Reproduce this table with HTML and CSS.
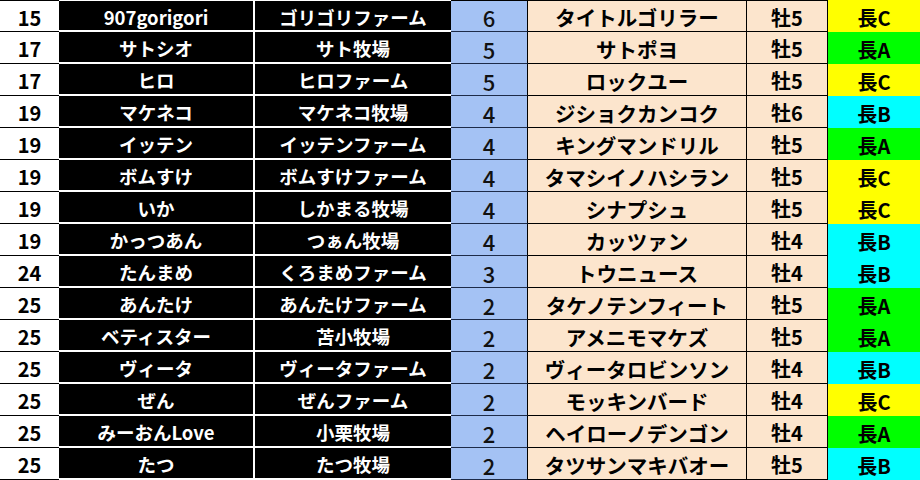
FILE: index.html
```html
<!DOCTYPE html>
<html lang="ja">
<head>
<meta charset="utf-8">
<link rel="stylesheet" href="styles.css">
</head>
<body>
<div class="sheet">
  <div class="row"><div class="c rank">15</div><div class="c name">907gorigori</div><div class="c farm">ゴリゴリファーム</div><div class="c num">6</div><div class="c horse">タイトルゴリラー</div><div class="c sex">牡5</div><div class="c type t-c">長C</div></div>
  <div class="row"><div class="c rank">17</div><div class="c name">サトシオ</div><div class="c farm">サト牧場</div><div class="c num">5</div><div class="c horse">サトポヨ</div><div class="c sex">牡5</div><div class="c type t-a">長A</div></div>
  <div class="row"><div class="c rank">17</div><div class="c name">ヒロ</div><div class="c farm">ヒロファーム</div><div class="c num">5</div><div class="c horse">ロックユー</div><div class="c sex">牡5</div><div class="c type t-c">長C</div></div>
  <div class="row"><div class="c rank">19</div><div class="c name">マケネコ</div><div class="c farm">マケネコ牧場</div><div class="c num">4</div><div class="c horse">ジショクカンコク</div><div class="c sex">牡6</div><div class="c type t-b">長B</div></div>
  <div class="row"><div class="c rank">19</div><div class="c name">イッテン</div><div class="c farm">イッテンファーム</div><div class="c num">4</div><div class="c horse">キングマンドリル</div><div class="c sex">牡5</div><div class="c type t-a">長A</div></div>
  <div class="row"><div class="c rank">19</div><div class="c name">ボムすけ</div><div class="c farm">ボムすけファーム</div><div class="c num">4</div><div class="c horse">タマシイノハシラン</div><div class="c sex">牡5</div><div class="c type t-c">長C</div></div>
  <div class="row"><div class="c rank">19</div><div class="c name">いか</div><div class="c farm">しかまる牧場</div><div class="c num">4</div><div class="c horse">シナプシュ</div><div class="c sex">牡5</div><div class="c type t-c">長C</div></div>
  <div class="row"><div class="c rank">19</div><div class="c name">かっつあん</div><div class="c farm">つぁん牧場</div><div class="c num">4</div><div class="c horse">カッツァン</div><div class="c sex">牡4</div><div class="c type t-b">長B</div></div>
  <div class="row"><div class="c rank">24</div><div class="c name">たんまめ</div><div class="c farm">くろまめファーム</div><div class="c num">3</div><div class="c horse">トウニュース</div><div class="c sex">牡4</div><div class="c type t-b">長B</div></div>
  <div class="row"><div class="c rank">25</div><div class="c name">あんたけ</div><div class="c farm">あんたけファーム</div><div class="c num">2</div><div class="c horse">タケノテンフィート</div><div class="c sex">牡5</div><div class="c type t-a">長A</div></div>
  <div class="row"><div class="c rank">25</div><div class="c name">ベティスター</div><div class="c farm">苫小牧場</div><div class="c num">2</div><div class="c horse">アメニモマケズ</div><div class="c sex">牡5</div><div class="c type t-a">長A</div></div>
  <div class="row"><div class="c rank">25</div><div class="c name">ヴィータ</div><div class="c farm">ヴィータファーム</div><div class="c num">2</div><div class="c horse">ヴィータロビンソン</div><div class="c sex">牡4</div><div class="c type t-b">長B</div></div>
  <div class="row"><div class="c rank">25</div><div class="c name">ぜん</div><div class="c farm">ぜんファーム</div><div class="c num">2</div><div class="c horse">モッキンバード</div><div class="c sex">牡4</div><div class="c type t-c">長C</div></div>
  <div class="row"><div class="c rank">25</div><div class="c name">みーおんLove</div><div class="c farm">小栗牧場</div><div class="c num">2</div><div class="c horse">ヘイローノデンゴン</div><div class="c sex">牡4</div><div class="c type t-a">長A</div></div>
  <div class="row"><div class="c rank">25</div><div class="c name">たつ</div><div class="c farm">たつ牧場</div><div class="c num">2</div><div class="c horse">タツサンマキバオー</div><div class="c sex">牡5</div><div class="c type t-b">長B</div></div>
</div>
</body>
</html>
```
FILE: styles.css
```css
html, body {
  margin: 0;
  padding: 0;
  background: #fff;
}
body {
  width: 920px;
  height: 480px;
  overflow: hidden;
  font-family: "Noto Sans CJK JP", "Noto Sans", sans-serif;
  font-weight: 700;
  color: #000;
}
.sheet {
  display: flex;
  flex-direction: column;
  width: 920px;
}
.row {
  display: flex;
  height: 32px;
}
.row:first-child .c {
  border-top: 1px solid #000;
}
.row:first-child .name,
.row:first-child .farm {
  border-top-color: #fff;
}
.c {
  box-sizing: border-box;
  display: flex;
  align-items: center;
  justify-content: center;
  height: 100%;
  padding-top: 3px;
  border-bottom: 1px solid #000;
  white-space: nowrap;
  line-height: 1;
}
.rank {
  width: 59px;
  background: #fff;
  font-size: 20px;
}
.name,
.farm {
  width: 196px;
  background: #000;
  color: #fff;
  font-size: 18.5px;
  border-bottom: 2px solid #fff;
}
.name {
  border-right: 2px solid #fff;
}
.num {
  width: 77px;
  background: #a4c2f4;
  color: #111;
  font-weight: 500;
  font-size: 22px;
  padding-top: 2px;
  border-right: 1px solid #000;
  border-bottom-color: #1d2b48;
}
.horse {
  width: 219px;
  background: #fce5cd;
  font-size: 20.5px;
  border-right: 1px solid #000;
}
.sex {
  width: 81px;
  background: #fce5cd;
  font-size: 20px;
  border-right: 1px solid #000;
}
.type {
  flex: 1;
  font-size: 20px;
  border-bottom: none;
}
.row:first-child .type {
  border-top: none;
}
.t-a { background: #00ff00; }
.t-b { background: #00ffff; }
.t-c { background: #ffff00; }
```
